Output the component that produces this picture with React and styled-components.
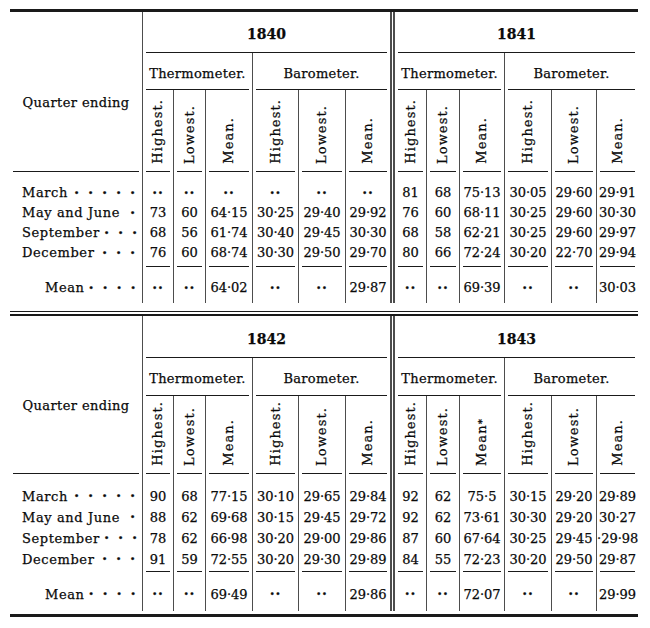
import React from 'react'
import styled, { createGlobalStyle, css } from 'styled-components'

const INK = '#0a0a0a'
const RULE = '#1a1a1a'
const FAINT = '#4d4d4d'

const GlobalStyle = createGlobalStyle`
  html, body {
    margin: 0;
    padding: 0;
    background: #fff;
  }
  body {
    font-family: 'DejaVu Serif', 'Liberation Serif', serif;
    color: ${INK};
    -webkit-text-stroke: 0.25px ${INK};
  }
`

// short rule drawn under a cell, leaving a small gap at each end
const underline = (inset = 3, weight = 1) => css`
  background-image: linear-gradient(${RULE}, ${RULE});
  background-repeat: no-repeat;
  background-position: center bottom;
  background-size: calc(100% - ${inset * 2}px) ${weight}px;
`

const edge = ({ $edge }) => {
  if ($edge === 'double') return css`border-left: 5px double ${FAINT};`
  if ($edge === 'thin') return css`border-left: 1px solid ${FAINT};`
  return ''
}

const Sheet = styled.div`
  width: 628px;
  margin: 9px 0 0 10px;
`

const HeavyRule = styled.div`
  height: 3px;
  background: ${RULE};
  margin-top: ${props => props.$gap || 0}px;
`

const DoubleRule = styled.div`
  box-sizing: border-box;
  height: 5px;
  margin-top: 8px;
  border-top: 1px solid ${RULE};
  border-bottom: 2px solid ${RULE};
`

const Table = styled.table`
  width: 628px;
  table-layout: fixed;
  border-collapse: separate;
  border-spacing: 0;
  font-size: 13px;
`

const Col = styled.col`
  width: ${props => props.$w}px;
`

const HeadRow = styled.tr`
  height: ${props => props.$h}px;
`

const LabelHead = styled.th`
  padding: 20px 0 0;
  font-weight: normal;
  font-size: 13px;
  letter-spacing: 0.4px;
  text-align: center;
  vertical-align: middle;
  ${underline(3)}
`

const YearCell = styled.th`
  padding: 3px 0 0;
  font-size: 14px;
  font-weight: bold;
  text-align: center;
  vertical-align: middle;
  ${edge}
  ${underline(3)}
`

const GroupCell = styled.th`
  padding: 3px 0 0;
  font-weight: normal;
  font-size: 13px;
  letter-spacing: 0.3px;
  white-space: nowrap;
  text-align: center;
  vertical-align: middle;
  ${edge}
  ${underline(3)}
`

const SubHead = styled.th`
  padding: 0 0 5px;
  font-weight: normal;
  text-align: center;
  vertical-align: bottom;
  ${edge}
  ${underline(3)}
`

const Rotated = styled.span`
  display: inline-block;
  writing-mode: vertical-rl;
  transform: rotate(180deg);
  font-size: 13px;
  line-height: 14px;
  letter-spacing: 1.1px;
  white-space: nowrap;
`

const Star = styled.span`
  font-size: 10px;
  font-weight: bold;
`

const LabelCell = styled.td`
  padding: ${props => props.$top}px 2px ${props => props.$bottom}px ${props => props.$indent}px;
  line-height: ${props => props.$lh}px;
`

const Label = styled.div`
  display: flex;
  align-items: center;
  justify-content: space-between;
  white-space: nowrap;
  letter-spacing: 0.6px;
`

const Leader = styled.span`
  display: flex;
`

const Dot = styled.span`
  width: 14px;
  text-align: center;
  font-size: 15px;
  font-weight: bold;
`

const Num = styled.td`
  padding: ${props => props.$top}px 0 ${props => props.$bottom}px;
  line-height: ${props => props.$lh}px;
  text-align: center;
  white-space: nowrap;
  font-size: ${props => (props.$blank ? '14px' : '13px')};
  font-weight: ${props => (props.$blank ? 'bold' : 'normal')};
  letter-spacing: ${props => (props.$blank ? '1px' : '0')};
  ${edge}
  ${props => props.$rule && underline(3)}
`

const WIDTHS = [
  [31, 32, 47, 46, 47, 45],
  [36, 33, 45, 47, 45, 42]
]

const SUBS = ['Highest.', 'Lowest.', 'Mean.', 'Highest.', 'Lowest.', 'Mean.']

const QUARTERS = [
  { label: 'March', dots: 5 },
  { label: 'May and June', dots: 1 },
  { label: 'September', dots: 3 },
  { label: 'December', dots: 3 }
]

const B = '··'

const TABLES = [
  {
    dims: { year: 41, group: 37, head: 82, lh: 20, top: 11, bottom: 4, meanTop: 11, meanBottom: 5 },
    years: [
      {
        year: '1840',
        rows: [
          [B, B, B, B, B, B],
          ['73', '60', '64·15', '30·25', '29·40', '29·92'],
          ['68', '56', '61·74', '30·40', '29·45', '30·30'],
          ['76', '60', '68·74', '30·30', '29·50', '29·70']
        ],
        mean: [B, B, '64·02', B, B, '29·87']
      },
      {
        year: '1841',
        rows: [
          ['81', '68', '75·13', '30·05', '29·60', '29·91'],
          ['76', '60', '68·11', '30·25', '29·60', '30·30'],
          ['68', '58', '62·21', '30·25', '29·60', '29·97'],
          ['80', '66', '72·24', '30·20', '22·70', '29·94']
        ],
        mean: [B, B, '69·39', B, B, '30·03']
      }
    ]
  },
  {
    dims: { year: 42, group: 38, head: 78, lh: 21, top: 12, bottom: 2, meanTop: 12, meanBottom: 6 },
    years: [
      {
        year: '1842',
        rows: [
          ['90', '68', '77·15', '30·10', '29·65', '29·84'],
          ['88', '62', '69·68', '30·15', '29·45', '29·72'],
          ['78', '62', '66·98', '30·20', '29·00', '29·86'],
          ['91', '59', '72·55', '30·20', '29·30', '29·89']
        ],
        mean: [B, B, '69·49', B, B, '29·86']
      },
      {
        year: '1843',
        starMean: true,
        rows: [
          ['92', '62', '75·5', '30·15', '29·20', '29·89'],
          ['92', '62', '73·61', '30·30', '29·20', '30·27'],
          ['87', '60', '67·64', '30·25', '29·45', '·29·98'],
          ['84', '55', '72·23', '30·20', '29·50', '29·87']
        ],
        mean: [B, B, '72·07', B, B, '29·99']
      }
    ]
  }
]

const edgeFor = (yi, ci) => (yi && !ci ? 'double' : 'thin')

const Leaders = ({ count }) => (
  <Leader>
    {Array.from({ length: count }, (_, i) => <Dot key={i}>·</Dot>)}
  </Leader>
)

function QuarterTable ({ dims, years }) {
  const last = QUARTERS.length - 1
  return (
    <Table>
      <colgroup>
        <Col $w={132} />
        {years.map((y, yi) => WIDTHS[yi].map((w, ci) => <Col key={`${y.year}-${ci}`} $w={w} />))}
      </colgroup>
      <thead>
        <HeadRow $h={dims.year}>
          <LabelHead rowSpan={3}>Quarter ending</LabelHead>
          {years.map((y, yi) => (
            <YearCell key={y.year} colSpan={6} $edge={edgeFor(yi, 0)}>{y.year}</YearCell>
          ))}
        </HeadRow>
        <HeadRow $h={dims.group}>
          {years.map((y, yi) => (
            <React.Fragment key={y.year}>
              <GroupCell colSpan={3} $edge={edgeFor(yi, 0)}>Thermometer.</GroupCell>
              <GroupCell colSpan={3} $edge='thin'>Barometer.</GroupCell>
            </React.Fragment>
          ))}
        </HeadRow>
        <HeadRow $h={dims.head}>
          {years.map((y, yi) => SUBS.map((s, ci) => (
            <SubHead key={`${y.year}-${ci}`} $edge={edgeFor(yi, ci)}>
              {y.starMean && ci === 2
                ? <Rotated>Mean<Star>*</Star></Rotated>
                : <Rotated>{s}</Rotated>}
            </SubHead>
          )))}
        </HeadRow>
      </thead>
      <tbody>
        {QUARTERS.map((q, ri) => {
          const top = ri === 0 ? dims.top : 0
          const bottom = ri === last ? dims.bottom : 0
          return (
            <tr key={q.label}>
              <LabelCell $top={top} $bottom={bottom} $indent={12} $lh={dims.lh}>
                <Label>{q.label}<Leaders count={q.dots} /></Label>
              </LabelCell>
              {years.map((y, yi) => y.rows[ri].map((v, ci) => (
                <Num
                  key={`${y.year}-${ci}`}
                  $edge={edgeFor(yi, ci)}
                  $top={top}
                  $bottom={bottom}
                  $lh={dims.lh}
                  $blank={v === B}
                  $rule={ri === last}
                >
                  {v}
                </Num>
              )))}
            </tr>
          )
        })}
        <tr>
          <LabelCell $top={dims.meanTop} $bottom={dims.meanBottom} $indent={35} $lh={dims.lh}>
            <Label>Mean<Leaders count={4} /></Label>
          </LabelCell>
          {years.map((y, yi) => y.mean.map((v, ci) => (
            <Num
              key={`${y.year}-m${ci}`}
              $edge={edgeFor(yi, ci)}
              $top={dims.meanTop}
              $bottom={dims.meanBottom}
              $lh={dims.lh}
              $blank={v === B}
            >
              {v}
            </Num>
          )))}
        </tr>
      </tbody>
    </Table>
  )
}

export default function App () {
  return (
    <>
      <GlobalStyle />
      <Sheet>
        <HeavyRule />
        <QuarterTable {...TABLES[0]} />
        <DoubleRule />
        <QuarterTable {...TABLES[1]} />
        <HeavyRule $gap={3} />
      </Sheet>
    </>
  )
}
